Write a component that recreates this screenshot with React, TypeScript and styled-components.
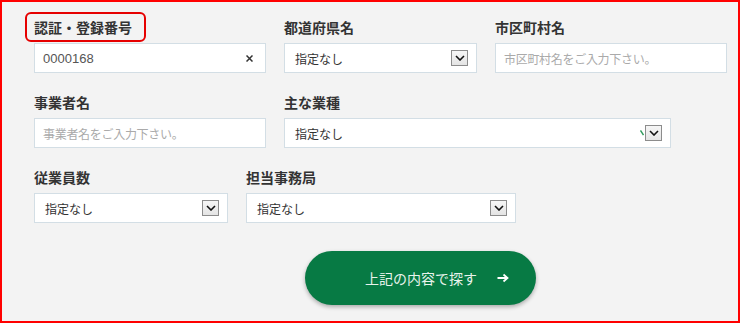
import React from "react";
import styled, { createGlobalStyle } from "styled-components";

const GlobalStyle = createGlobalStyle`
  html, body {
    margin: 0;
    padding: 0;
    background: #f3f3f3;
  }
  * {
    box-sizing: border-box;
  }
`;

// STYLED COMPONENTS
const Frame = styled.div`
  width: 740px;
  height: 323px;
  border: 2px solid #ff0000;
  background: #f3f3f3;
  padding: 15px 0 0 32px;
  font-family: "Noto Sans CJK JP", "Liberation Sans", sans-serif;
  color: #333;
`;

const FormRow = styled.div`
  display: flex;
  gap: 18px;
  margin-bottom: 19px;
`;

const Field = styled.div<{ $width: number }>`
  width: ${(p) => p.$width}px;
  display: flex;
  flex-direction: column;
  gap: 6px;
`;

const Label = styled.label<{ $highlight?: boolean }>`
  position: relative;
  align-self: flex-start;
  font-size: 14px;
  font-weight: 700;
  line-height: 20px;
  color: #333;

  ${(p) =>
    p.$highlight &&
    `
    &::after {
      content: "";
      position: absolute;
      top: -5px;
      bottom: -5px;
      left: -9px;
      right: -14px;
      border: 2px solid #e60000;
      border-radius: 6px;
    }
  `}
`;

const InputBox = styled.div`
  height: 30px;
  background: #fff;
  border: 1px solid #d3dee5;
  display: flex;
  align-items: center;
  padding: 0 8px;
  gap: 8px;
`;

const TextValue = styled.span`
  flex: 1;
  font-family: "Liberation Sans", "Noto Sans CJK JP", sans-serif;
  font-size: 13px;
  color: #555;
`;

const Placeholder = styled.span`
  flex: 1;
  font-size: 12px;
  color: #aaa;
  letter-spacing: -0.3px;
`;

const ClearButton = styled.span`
  display: flex;
  align-items: center;
  margin-right: 4px;
`;

const SelectBox = styled.div`
  height: 30px;
  background: #fff;
  border: 1px solid #d3dee5;
  display: flex;
  align-items: center;
  padding: 0 8px 0 10px;
`;

const SelectText = styled.span`
  flex: 1;
  font-size: 12px;
  color: #333;
`;

const ArrowBox = styled.span`
  width: 17px;
  height: 16px;
  border: 1px solid #8c8c8c;
  background: linear-gradient(#f6f6f6, #e4e4e4);
  display: flex;
  align-items: center;
  justify-content: center;
`;

const Tick = styled.span`
  display: flex;
  margin-right: 1px;
`;

const SearchButton = styled.button`
  margin: 28px 0 0 271px;
  width: 231px;
  height: 54px;
  border: none;
  border-radius: 27px;
  background: #077a44;
  box-shadow: 0 2px 4px rgba(0, 0, 0, 0.3);
  display: flex;
  align-items: center;
  gap: 20px;
  padding: 0 0 0 60px;
  font-family: "Noto Sans CJK JP", sans-serif;
  font-size: 14px;
  color: #e8f3ec;
  cursor: pointer;
`;

const Chevron = () => (
  <svg width="10" height="6" viewBox="0 0 10 6">
    <path d="M1 1 L5 5 L9 1" fill="none" stroke="#111" strokeWidth="1.6" />
  </svg>
);

interface SelectProps {
  tick?: boolean;
}

function Select({ tick }: SelectProps) {
  return (
    <SelectBox>
      <SelectText>指定なし</SelectText>
      {tick && (
        <Tick>
          <svg width="4" height="6" viewBox="0 0 4 6">
            <path d="M0.5 0.5 L3.5 5" stroke="#2f9a5c" strokeWidth="1.4" />
          </svg>
        </Tick>
      )}
      <ArrowBox>
        <Chevron />
      </ArrowBox>
    </SelectBox>
  );
}

export default function App() {
  return (
    <>
      <GlobalStyle />
      <Frame>
        <FormRow>
          <Field $width={232}>
            <Label $highlight>認証・登録番号</Label>
            <InputBox>
              <TextValue>0000168</TextValue>
              <ClearButton>
                <svg width="7" height="7" viewBox="0 0 7 7">
                  <path d="M0.5 0.5 L6.5 6.5 M6.5 0.5 L0.5 6.5" stroke="#333" strokeWidth="1.5" />
                </svg>
              </ClearButton>
            </InputBox>
          </Field>
          <Field $width={193}>
            <Label>都道府県名</Label>
            <Select />
          </Field>
          <Field $width={232}>
            <Label>市区町村名</Label>
            <InputBox>
              <Placeholder>市区町村名をご入力下さい。</Placeholder>
            </InputBox>
          </Field>
        </FormRow>

        <FormRow>
          <Field $width={232}>
            <Label>事業者名</Label>
            <InputBox>
              <Placeholder>事業者名をご入力下さい。</Placeholder>
            </InputBox>
          </Field>
          <Field $width={387}>
            <Label>主な業種</Label>
            <Select tick />
          </Field>
        </FormRow>

        <FormRow>
          <Field $width={194}>
            <Label>従業員数</Label>
            <Select />
          </Field>
          <Field $width={270}>
            <Label>担当事務局</Label>
            <Select />
          </Field>
        </FormRow>

        <SearchButton>
          <span>上記の内容で探す</span>
          <svg width="12" height="10" viewBox="0 0 12 10">
            <path d="M0.5 5 H10 M6.5 1.5 L10.5 5 L6.5 8.5" fill="none" stroke="#fff" strokeWidth="1.8" />
          </svg>
        </SearchButton>
      </Frame>
    </>
  );
}
